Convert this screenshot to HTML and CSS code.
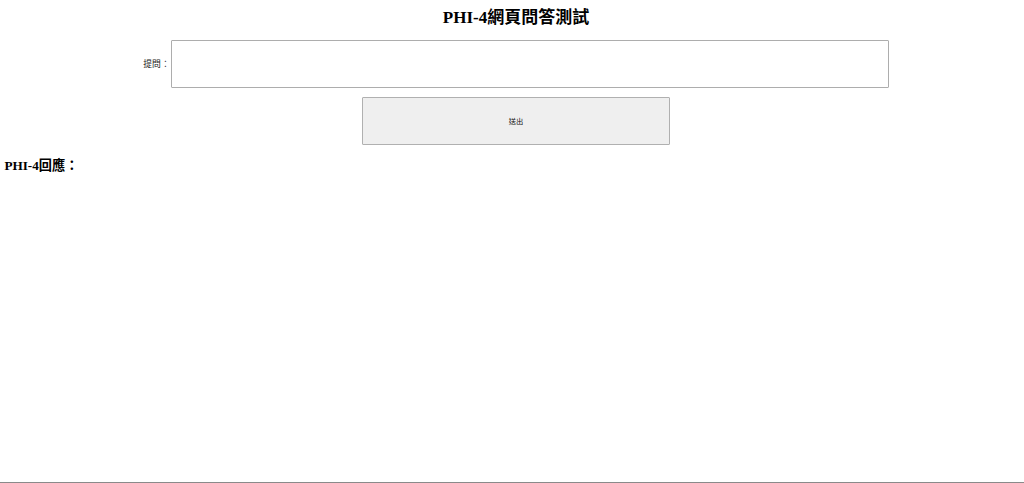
FILE: index.html
```html
<!DOCTYPE html>
<html lang="zh-Hant">
<head>
<meta charset="utf-8">
<title>PHI-4網頁問答測試</title>
<link rel="stylesheet" href="styles.css">
</head>
<body>
<h1 class="title">PHI-4網頁問答測試</h1>
<form class="ask-form">
  <div class="ask-row">
    <label class="ask-label" for="q">提問：</label>
    <textarea id="q" class="ask-input"></textarea>
  </div>
  <div class="btn-row">
    <button type="button" class="send-btn">送出</button>
  </div>
</form>
<h2 class="answer-title">PHI-4回應：</h2>
</body>
</html>
```

FILE: styles.css
```css
html, body {
  margin: 0;
  padding: 0;
}
body {
  box-sizing: border-box;
  min-height: 100vh;
  padding: 0 4.4px;
  border-bottom: 1px solid #8a8a8a;
  background: #fff;
  color: #000;
  font-family: "Liberation Serif", "Noto Sans CJK TC", serif;
}
.title {
  margin: 0;
  padding-top: 8px;
  padding-left: 8px;
  font-size: 17px;
  line-height: 20px;
  font-weight: bold;
  text-align: center;
}
.ask-form {
  margin: 12px 0 0;
  padding-left: 8px;
}
.ask-row {
  display: flex;
  align-items: center;
  justify-content: center;
  gap: 1px;
}
.ask-label {
  font-family: "Noto Sans CJK TC", "Liberation Sans", sans-serif;
  font-size: 8.8px;
  line-height: 12px;
  color: #222;
}
.ask-input {
  box-sizing: border-box;
  width: 718px;
  height: 48px;
  margin: 0;
  padding: 2px;
  border: 1px solid #adadad;
  border-radius: 1px;
  background: #fff;
  resize: none;
  font-size: 8px;
}
.btn-row {
  display: flex;
  justify-content: center;
  margin-top: 9px;
}
.send-btn {
  box-sizing: border-box;
  width: 308px;
  height: 48px;
  margin: 0;
  padding: 0;
  border: 1px solid #b0b0b0;
  border-radius: 1px;
  background: #efefef;
  color: #111;
  font-family: "Noto Sans CJK TC", "Liberation Sans", sans-serif;
  font-size: 7.3px;
}
.answer-title {
  margin: 13px 0 0;
  font-size: 13.2px;
  line-height: 16px;
  font-weight: bold;
}
```
